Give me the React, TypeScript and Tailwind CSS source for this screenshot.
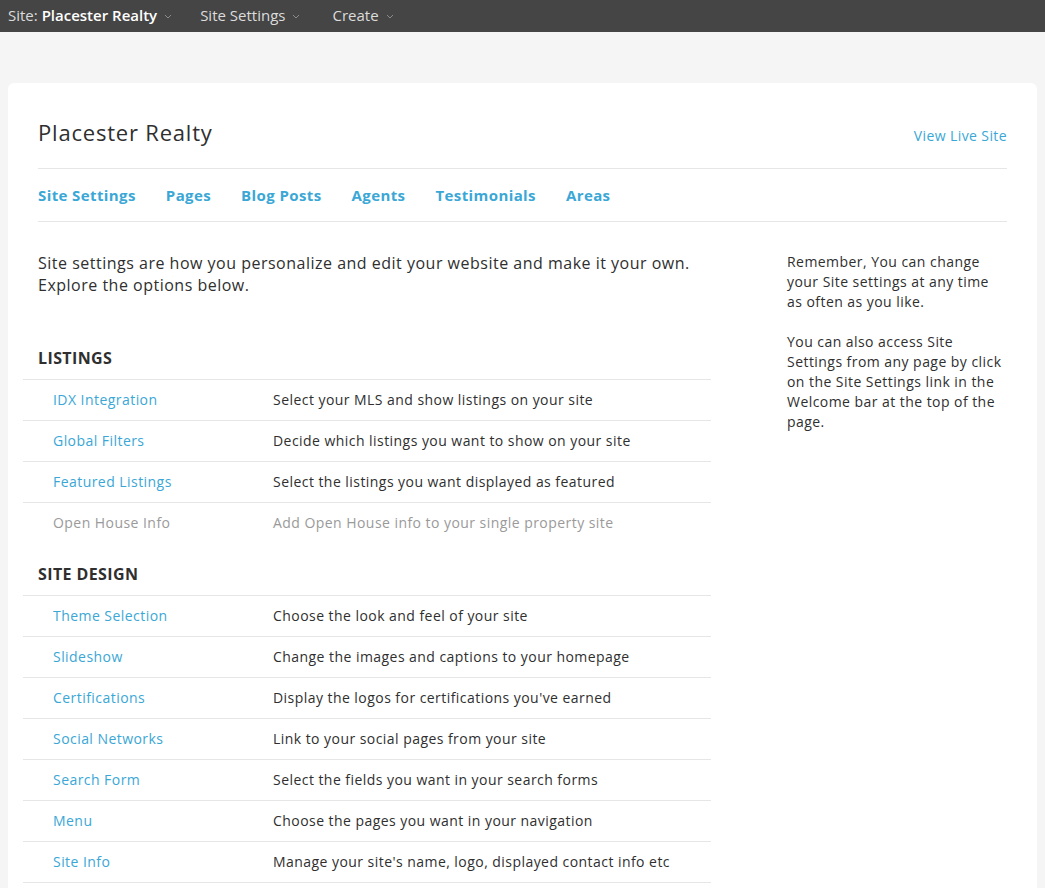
import React from "react";

const listings = [
  { name: "IDX Integration", desc: "Select your MLS and show listings on your site" },
  { name: "Global Filters", desc: "Decide which listings you want to show on your site" },
  { name: "Featured Listings", desc: "Select the listings you want displayed as featured" },
  { name: "Open House Info", desc: "Add Open House info to your single property site", disabled: true },
];

const design = [
  { name: "Theme Selection", desc: "Choose the look and feel of your site" },
  { name: "Slideshow", desc: "Change the images and captions to your homepage" },
  { name: "Certifications", desc: "Display the logos for certifications you've earned" },
  { name: "Social Networks", desc: "Link to your social pages from your site" },
  { name: "Search Form", desc: "Select the fields you want in your search forms" },
  { name: "Menu", desc: "Choose the pages you want in your navigation" },
  { name: "Site Info", desc: "Manage your site's name, logo, displayed contact info etc" },
];

const tabs = ["Site Settings", "Pages", "Blog Posts", "Agents", "Testimonials", "Areas"];

function Chevron() {
  return (
    <svg width="8" height="5" viewBox="0 0 8 5" className="ml-[7px] mt-[1px]">
      <path d="M1 1l3 3 3-3" fill="none" stroke="#8a8a8a" strokeWidth="1" />
    </svg>
  );
}

type Row = { name: string; desc: string; disabled?: boolean };

function Section({ title, rows, last }: { title: string; rows: Row[]; last?: boolean }) {
  return (
    <div>
      <h2 className="text-[16px] leading-[22px] font-bold tracking-[0.4px] text-[#2f2f2f] mb-[10px]">{title}</h2>
      <div className={`-mx-[15px] ${last ? "border-b border-[#e6e6e6]" : ""}`}>
        {rows.map((r) => (
          <div key={r.name} className="flex items-center h-[41px] pb-[1px] border-t border-[#e6e6e6] pl-[30px] text-[14px] tracking-[0.45px]">
            <a className={`w-[220px] ${r.disabled ? "text-[#9a9a9a]" : "text-[#3aa7d6]"}`}>{r.name}</a>
            <span className={r.disabled ? "text-[#9a9a9a]" : "text-[#2f2f2f]"}>{r.desc}</span>
          </div>
        ))}
      </div>
    </div>
  );
}

export default function App() {
  return (
    <div className="min-h-screen bg-[#f5f5f5] font-['Open_Sans',sans-serif] text-[#2f2f2f]">
      <div className="h-[32px] pb-[1px] bg-[#454545] flex items-center pl-[8px] text-[15px] text-[#dcdcdc]">
        <div className="flex items-center">
          <span>Site: <span className="text-white font-semibold">Placester Realty</span></span>
          <Chevron />
        </div>
        <div className="flex items-center ml-[28px]">
          <span>Site Settings</span>
          <Chevron />
        </div>
        <div className="flex items-center ml-[32px]">
          <span>Create</span>
          <Chevron />
        </div>
      </div>

      <div className="pt-[51px] pl-[8px] pr-[8px]">
        <div className="bg-white rounded-[6px] px-[30px] pt-[35px] min-h-[820px]">
          <div className="flex items-center justify-between pb-[22px] border-b border-[#e6e6e6]">
            <h1 className="text-[22px] leading-[28px] tracking-[0.8px] text-[#2f2f2f]">Placester Realty</h1>
            <a className="text-[14px] tracking-[0.4px] text-[#3aa7d6] mt-[7px]">View Live Site</a>
          </div>
          <nav className="flex items-center h-[53px] gap-[30px] border-b border-[#e6e6e6] text-[15px] tracking-[0.4px] font-bold text-[#3aa7d6]">
            {tabs.map((t) => (
              <a key={t}>{t}</a>
            ))}
          </nav>

          <div className="flex pt-[30px]">
            <div className="w-[658px]">
              <p className="text-[16px] leading-[22px] tracking-[0.5px] text-[#2f2f2f] mb-[51px]">
                Site settings are how you personalize and edit your website and make it your own.
                <br />
                Explore the options below.
              </p>
              <Section title="LISTINGS" rows={listings} />
              <div className="h-[20px]" />
              <Section title="SITE DESIGN" rows={design} last />
            </div>
            <aside className="ml-auto w-[220px] text-[14px] leading-[20px] tracking-[0.45px] text-[#2f2f2f]">
              <p>Remember, You can change your Site settings at any time as often as you like.</p>
              <p className="mt-[20px]">
                You can also access Site Settings from any page by click on the Site Settings link in the Welcome bar at the top of the page.
              </p>
            </aside>
          </div>
        </div>
      </div>
    </div>
  );
}
